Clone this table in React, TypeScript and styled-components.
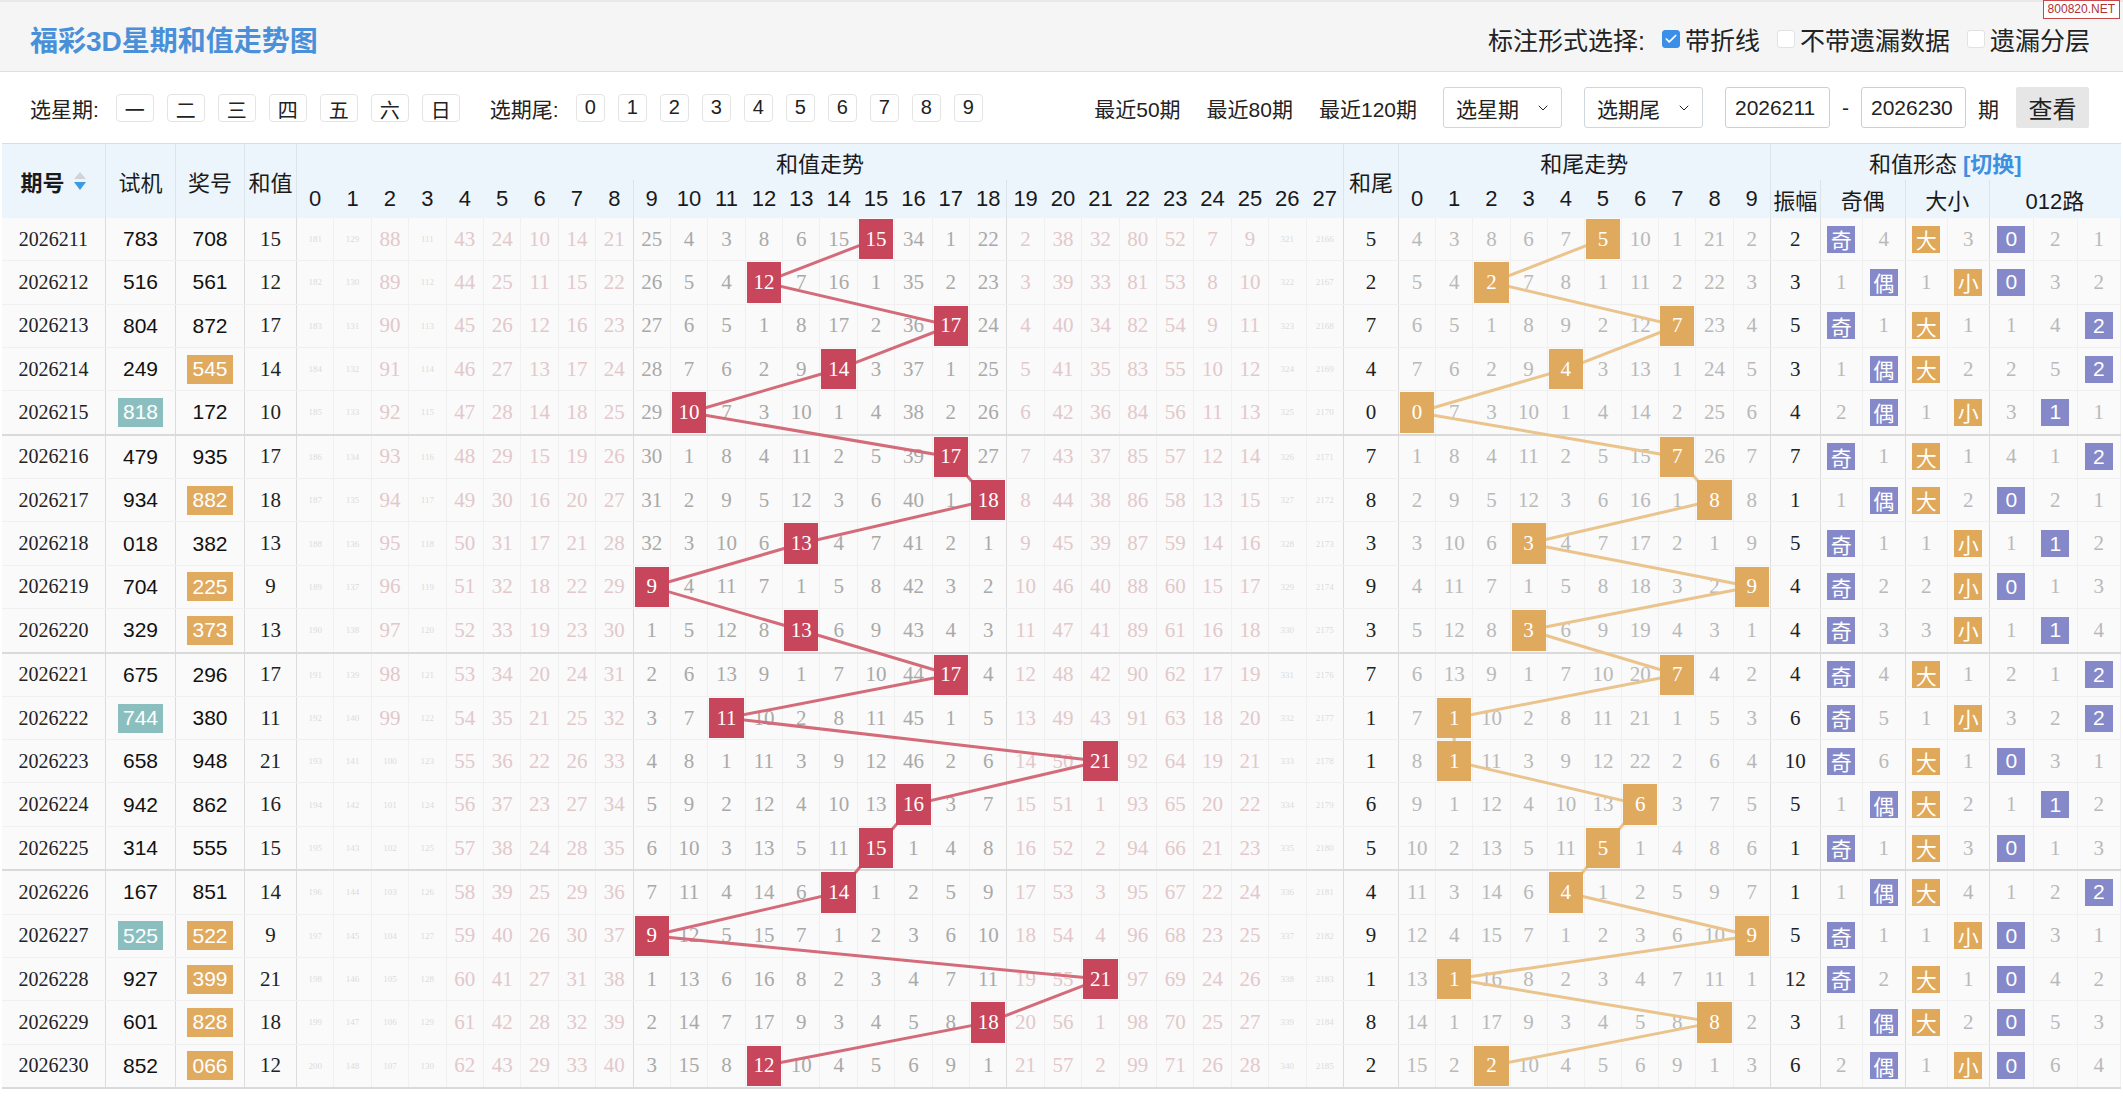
import React, { useLayoutEffect, useRef, useState } from 'react'
import styled, { createGlobalStyle } from 'styled-components'
import { Check, ChevronDown } from 'lucide-react'

const COLS =
  '104px 70px 69px 52px repeat(28, 37.4px) 55px repeat(10, 37.2px) 50px 42px 43px 42px 42px 44px 44px 43px'

type Draw = {
  id: string
  test: string
  prize: string
  sum: number
  trend: number[]
  tail: number[]
  amp: number
  oe: number[]
  bs: number[]
  road: number[]
}

const nums = (s: string) => s.split(' ').map(Number)

// [期号, 试机, 奖号, 和值, 和值遗漏0-27, 和尾遗漏0-9, 振幅, 奇偶, 大小, 012路]
const RAW: [string, string, string, number, string, string, number, string, string, string][] = [
  ['2026211', '783', '708', 15, '181 129 88 111 43 24 10 14 21 25 4 3 8 6 15 15 34 1 22 2 38 32 80 52 7 9 321 2166', '4 3 8 6 7 5 10 1 21 2', 2, '0 4', '0 3', '0 2 1'],
  ['2026212', '516', '561', 12, '182 130 89 112 44 25 11 15 22 26 5 4 12 7 16 1 35 2 23 3 39 33 81 53 8 10 322 2167', '5 4 2 7 8 1 11 2 22 3', 3, '1 0', '1 0', '0 3 2'],
  ['2026213', '804', '872', 17, '183 131 90 113 45 26 12 16 23 27 6 5 1 8 17 2 36 17 24 4 40 34 82 54 9 11 323 2168', '6 5 1 8 9 2 12 7 23 4', 5, '0 1', '0 1', '1 4 0'],
  ['2026214', '249', '545', 14, '184 132 91 114 46 27 13 17 24 28 7 6 2 9 14 3 37 1 25 5 41 35 83 55 10 12 324 2169', '7 6 2 9 4 3 13 1 24 5', 3, '1 0', '0 2', '2 5 0'],
  ['2026215', '818', '172', 10, '185 133 92 115 47 28 14 18 25 29 10 7 3 10 1 4 38 2 26 6 42 36 84 56 11 13 325 2170', '0 7 3 10 1 4 14 2 25 6', 4, '2 0', '1 0', '3 0 1'],
  ['2026216', '479', '935', 17, '186 134 93 116 48 29 15 19 26 30 1 8 4 11 2 5 39 17 27 7 43 37 85 57 12 14 326 2171', '1 8 4 11 2 5 15 7 26 7', 7, '0 1', '0 1', '4 1 0'],
  ['2026217', '934', '882', 18, '187 135 94 117 49 30 16 20 27 31 2 9 5 12 3 6 40 1 18 8 44 38 86 58 13 15 327 2172', '2 9 5 12 3 6 16 1 8 8', 1, '1 0', '0 2', '0 2 1'],
  ['2026218', '018', '382', 13, '188 136 95 118 50 31 17 21 28 32 3 10 6 13 4 7 41 2 1 9 45 39 87 59 14 16 328 2173', '3 10 6 3 4 7 17 2 1 9', 5, '0 1', '1 0', '1 0 2'],
  ['2026219', '704', '225', 9, '189 137 96 119 51 32 18 22 29 9 4 11 7 1 5 8 42 3 2 10 46 40 88 60 15 17 329 2174', '4 11 7 1 5 8 18 3 2 9', 4, '0 2', '2 0', '0 1 3'],
  ['2026220', '329', '373', 13, '190 138 97 120 52 33 19 23 30 1 5 12 8 13 6 9 43 4 3 11 47 41 89 61 16 18 330 2175', '5 12 8 3 6 9 19 4 3 1', 4, '0 3', '3 0', '1 0 4'],
  ['2026221', '675', '296', 17, '191 139 98 121 53 34 20 24 31 2 6 13 9 1 7 10 44 17 4 12 48 42 90 62 17 19 331 2176', '6 13 9 1 7 10 20 7 4 2', 4, '0 4', '0 1', '2 1 0'],
  ['2026222', '744', '380', 11, '192 140 99 122 54 35 21 25 32 3 7 11 10 2 8 11 45 1 5 13 49 43 91 63 18 20 332 2177', '7 1 10 2 8 11 21 1 5 3', 6, '0 5', '1 0', '3 2 0'],
  ['2026223', '658', '948', 21, '193 141 100 123 55 36 22 26 33 4 8 1 11 3 9 12 46 2 6 14 50 21 92 64 19 21 333 2178', '8 1 11 3 9 12 22 2 6 4', 10, '0 6', '0 1', '0 3 1'],
  ['2026224', '942', '862', 16, '194 142 101 124 56 37 23 27 34 5 9 2 12 4 10 13 16 3 7 15 51 1 93 65 20 22 334 2179', '9 1 12 4 10 13 6 3 7 5', 5, '1 0', '0 2', '1 0 2'],
  ['2026225', '314', '555', 15, '195 143 102 125 57 38 24 28 35 6 10 3 13 5 11 15 1 4 8 16 52 2 94 66 21 23 335 2180', '10 2 13 5 11 5 1 4 8 6', 1, '0 1', '0 3', '0 1 3'],
  ['2026226', '167', '851', 14, '196 144 103 126 58 39 25 29 36 7 11 4 14 6 14 1 2 5 9 17 53 3 95 67 22 24 336 2181', '11 3 14 6 4 1 2 5 9 7', 1, '1 0', '0 4', '1 2 0'],
  ['2026227', '525', '522', 9, '197 145 104 127 59 40 26 30 37 9 12 5 15 7 1 2 3 6 10 18 54 4 96 68 23 25 337 2182', '12 4 15 7 1 2 3 6 10 9', 5, '0 1', '1 0', '0 3 1'],
  ['2026228', '927', '399', 21, '198 146 105 128 60 41 27 31 38 1 13 6 16 8 2 3 4 7 11 19 55 21 97 69 24 26 338 2183', '13 1 16 8 2 3 4 7 11 1', 12, '0 2', '0 1', '0 4 2'],
  ['2026229', '601', '828', 18, '199 147 106 129 61 42 28 32 39 2 14 7 17 9 3 4 5 8 18 20 56 1 98 70 25 27 339 2184', '14 1 17 9 3 4 5 8 8 2', 3, '1 0', '0 2', '0 5 3'],
  ['2026230', '852', '066', 12, '200 148 107 130 62 43 29 33 40 3 15 8 12 10 4 5 6 9 1 21 57 2 99 71 26 28 340 2185', '15 2 2 10 4 5 6 9 1 3', 6, '2 0', '1 0', '0 6 4'],
]

const DRAWS: Draw[] = RAW.map(([id, test, prize, sum, trend, tail, amp, oe, bs, road]) => ({
  id,
  test,
  prize,
  sum,
  trend: nums(trend),
  tail: nums(tail),
  amp,
  oe: nums(oe),
  bs: nums(bs),
  road: nums(road),
}))

// 组三：恰好两位相同
const isPair = (n: string) => new Set(n.split('')).size === 2

const GlobalStyle = createGlobalStyle`
  html, body { margin: 0; padding: 0; background: #fff; }
  body {
    font-family: "Liberation Sans", "Noto Sans CJK SC", sans-serif;
    color: #222;
  }
  * { box-sizing: border-box; }
`

const Page = styled.div`
  position: relative;
  width: 100%;
`

const Watermark = styled.div`
  position: absolute;
  top: 0;
  right: 3px;
  padding: 1px 4px;
  border: 1px solid #c84848;
  background: #fff;
  color: #b03232;
  font-size: 12px;
  line-height: 15px;
`

const TitleBar = styled.header`
  height: 72px;
  display: flex;
  align-items: center;
  justify-content: space-between;
  padding: 4px 33px 0 30px;
  background: #f5f5f5;
  border-top: 2px solid #e8e8e8;
  border-bottom: 1px solid #dedede;
`

const Title = styled.h1`
  margin: 0;
  font-size: 28px;
  font-weight: 700;
  color: #4a90d9;
`

const MarkOptions = styled.div`
  display: flex;
  align-items: center;
  font-size: 25px;
  color: #222;
`

const OptionLabel = styled.label`
  display: flex;
  align-items: center;
  gap: 5px;
  margin-left: 17px;
`

const CheckBox = styled.span<{ $on?: boolean }>`
  width: 18px;
  height: 18px;
  border-radius: 3px;
  display: flex;
  align-items: center;
  justify-content: center;
  background: ${p => (p.$on ? '#3b8fe6' : '#fff')};
  border: 1px solid ${p => (p.$on ? '#3b8fe6' : '#e2e2e2')};
`

const FilterBar = styled.div`
  height: 71px;
  display: flex;
  align-items: center;
  justify-content: space-between;
  padding: 0 34px 0 30px;
  font-size: 21px;
`

const Group = styled.div<{ $gap: number }>`
  display: flex;
  align-items: center;
  gap: ${p => p.$gap}px;
`

const GroupLabel = styled.span`
  margin-right: 4px;
`

const PickButton = styled.button<{ $wide?: boolean }>`
  width: ${p => (p.$wide ? 38 : 29)}px;
  height: 28px;
  padding: 0;
  border: 1px solid #e4e4e4;
  border-radius: 4px;
  background: #fff;
  font-family: inherit;
  font-size: 20px;
  color: #222;
`

const Spacer = styled.span`
  width: 4px;
`

const Recent = styled.span`
  color: #222;
  margin-right: 4px;
`

const SelectBox = styled.div`
  width: 119px;
  height: 41px;
  display: flex;
  align-items: center;
  justify-content: space-between;
  padding: 0 10px 0 12px;
  border: 1px solid #cfd6dd;
  border-radius: 3px;
  background: #fff;
`

const RangeInput = styled.input`
  width: 105px;
  height: 41px;
  padding: 0 9px;
  border: 1px solid #cfcfcf;
  border-radius: 3px;
  font-family: inherit;
  font-size: 21px;
  color: #222;
`

const QueryButton = styled.button`
  width: 73px;
  height: 41px;
  margin-left: 5px;
  border: none;
  border-radius: 2px;
  background: #e6e6e6;
  font-family: inherit;
  font-size: 24px;
  color: #222;
`

const Board = styled.div`
  position: relative;
  isolation: isolate;
  margin: 0 2px;
`

const HeadGrid = styled.div`
  display: grid;
  grid-template-columns: ${COLS};
  grid-template-rows: 36px 38px;
  background: #edf5fc;
  border-top: 1px solid #dcdcdc;
`

const HeadCell = styled.div<{ $span?: number; $tall?: boolean; $line?: boolean; $bold?: boolean }>`
  grid-column: span ${p => p.$span ?? 1};
  grid-row: span ${p => (p.$tall ? 2 : 1)};
  display: flex;
  align-items: center;
  justify-content: center;
  white-space: nowrap;
  font-size: 22px;
  font-weight: ${p => (p.$bold ? 700 : 400)};
  color: #1a1a1a;
  border-right: 1px solid ${p => (p.$line ? '#dbe3eb' : 'transparent')};
`

const Switch = styled.span`
  margin-left: 6px;
  color: #3d8fe0;
  font-weight: 700;
`

const Row = styled.div<{ $groupEnd: boolean }>`
  display: grid;
  grid-template-columns: ${COLS};
  height: ${p => (p.$groupEnd ? 44.6 : 43.3)}px;
  background: #fafafa;
  border-bottom: ${p => (p.$groupEnd ? '2px solid #dadada' : '1px solid #f0f0f0')};
`

const Cell = styled.div<{ $hard?: boolean }>`
  display: flex;
  align-items: center;
  justify-content: center;
  min-width: 0;
  border-right: 1px solid ${p => (p.$hard ? '#dcdcdc' : '#f0f0f0')};
  font-family: "Liberation Serif", "Noto Sans CJK SC", serif;
  font-size: 21px;
  color: #222;
`

const IdCell = styled(Cell)`
  font-size: 20px;
`

const DrawCell = styled(Cell)`
  font-family: "Liberation Sans", "Noto Sans CJK SC", sans-serif;
  color: #111;
`

const TrendCell = styled(Cell)<{ $tone: 'pink' | 'gray' }>`
  color: ${p => (p.$tone === 'pink' ? '#e2c8cb' : '#a9a9a9')};
`

const MissCell = styled(Cell)`
  color: #b9b9b9;
`

const Tiny = styled.span`
  font-size: 9px;
  color: #dadada;
`

const Tag = styled.span<{ $tone: 'teal' | 'gold' }>`
  height: 29px;
  padding: 0 5px;
  display: flex;
  align-items: center;
  background: ${p => (p.$tone === 'teal' ? '#8bbfbf' : '#e0aa5f')};
  color: #fff;
`

const Hit = styled.span<{ $tone: 'red' | 'gold' }>`
  position: relative;
  z-index: 2;
  width: calc(100% - 2px);
  height: calc(100% - 2px);
  display: flex;
  align-items: center;
  justify-content: center;
  background: ${p => (p.$tone === 'red' ? '#c8465b' : '#e0aa5e')};
  color: #fff;
`

const Badge = styled.span<{ $tone: 'violet' | 'gold' }>`
  width: 28px;
  height: 27px;
  display: flex;
  align-items: center;
  justify-content: center;
  background: ${p => (p.$tone === 'violet' ? '#8589c9' : '#e0a95a')};
  color: #fff;
  font-family: "Liberation Sans", "Noto Sans CJK SC", sans-serif;
  font-size: 21px;
`

const Lines = styled.svg`
  position: absolute;
  inset: 0;
  width: 100%;
  height: 100%;
  z-index: 1;
  pointer-events: none;
`

function SortIcon() {
  return (
    <svg width="14" height="20" viewBox="0 0 14 20" style={{ marginLeft: 8 }}>
      <path d="M7 1 L13 8 H1 Z" fill="#cfd4da" />
      <path d="M1 11 H13 L7 19 Z" fill="#3a9be2" />
    </svg>
  )
}

function TableHead() {
  return (
    <HeadGrid>
      <HeadCell $tall $line $bold>
        期号
        <SortIcon />
      </HeadCell>
      <HeadCell $tall $line>试机</HeadCell>
      <HeadCell $tall $line>奖号</HeadCell>
      <HeadCell $tall $line>和值</HeadCell>
      <HeadCell $span={28} $line>和值走势</HeadCell>
      <HeadCell $tall $line>和尾</HeadCell>
      <HeadCell $span={10} $line>和尾走势</HeadCell>
      <HeadCell $span={8}>
        和值形态<Switch>[切换]</Switch>
      </HeadCell>
      {Array.from({ length: 28 }, (_, i) => (
        <HeadCell key={`s${i}`} $line={i === 8 || i === 18 || i === 27}>
          {i}
        </HeadCell>
      ))}
      {Array.from({ length: 10 }, (_, i) => (
        <HeadCell key={`t${i}`} $line={i === 9}>
          {i}
        </HeadCell>
      ))}
      <HeadCell $line>振幅</HeadCell>
      <HeadCell $span={2} $line>奇偶</HeadCell>
      <HeadCell $span={2} $line>大小</HeadCell>
      <HeadCell $span={3}>012路</HeadCell>
    </HeadGrid>
  )
}

function FormCells({ values, hit, labels, tone, last }: { values: number[]; hit: number; labels: string[]; tone: 'violet' | 'gold'; last?: boolean }) {
  return (
    <>
      {values.map((v, i) => (
        <MissCell key={i} $hard={i === values.length - 1 && !last}>
          {i === hit ? <Badge $tone={tone}>{labels[i]}</Badge> : v}
        </MissCell>
      ))}
    </>
  )
}

function DrawRow({ d, groupEnd }: { d: Draw; groupEnd: boolean }) {
  const tail = d.sum % 10
  return (
    <Row $groupEnd={groupEnd}>
      <IdCell $hard>{d.id}</IdCell>
      <DrawCell $hard>{isPair(d.test) ? <Tag $tone="teal">{d.test}</Tag> : d.test}</DrawCell>
      <DrawCell $hard>{isPair(d.prize) ? <Tag $tone="gold">{d.prize}</Tag> : d.prize}</DrawCell>
      <Cell $hard>{d.sum}</Cell>
      {d.trend.map((v, c) => (
        <TrendCell key={c} $tone={c >= 9 && c <= 18 ? 'gray' : 'pink'} $hard={c === 8 || c === 18 || c === 27}>
          {c === d.sum ? (
            <Hit $tone="red" data-hit="sum">
              {v}
            </Hit>
          ) : v >= 100 ? (
            <Tiny>{v}</Tiny>
          ) : (
            v
          )}
        </TrendCell>
      ))}
      <Cell $hard>{tail}</Cell>
      {d.tail.map((v, c) => (
        <MissCell key={c} $hard={c === 9}>
          {c === tail ? (
            <Hit $tone="gold" data-hit="tail">
              {v}
            </Hit>
          ) : (
            v
          )}
        </MissCell>
      ))}
      <Cell $hard>{d.amp}</Cell>
      <FormCells values={d.oe} hit={d.sum % 2 === 1 ? 0 : 1} labels={['奇', '偶']} tone="violet" />
      <FormCells values={d.bs} hit={d.sum >= 14 ? 0 : 1} labels={['大', '小']} tone="gold" />
      <FormCells values={d.road} hit={d.sum % 3} labels={['0', '1', '2']} tone="violet" last />
    </Row>
  )
}

function TrendBoard() {
  const boardRef = useRef<HTMLDivElement>(null)
  const [paths, setPaths] = useState({ sum: '', tail: '' })

  useLayoutEffect(() => {
    const board = boardRef.current
    if (!board) return
    const measure = () => {
      const box = board.getBoundingClientRect()
      const points = (kind: string) =>
        Array.from(board.querySelectorAll<HTMLElement>(`[data-hit="${kind}"]`))
          .map(el => {
            const r = el.getBoundingClientRect()
            return `${r.left - box.left + r.width / 2},${r.top - box.top + r.height / 2}`
          })
          .join(' ')
      setPaths({ sum: points('sum'), tail: points('tail') })
    }
    measure()
    window.addEventListener('resize', measure)
    return () => window.removeEventListener('resize', measure)
  }, [])

  return (
    <Board ref={boardRef}>
      <TableHead />
      {DRAWS.map((d, i) => (
        <DrawRow key={d.id} d={d} groupEnd={i % 5 === 4} />
      ))}
      <Lines>
        <polyline points={paths.sum} fill="none" stroke="#d46b7a" strokeWidth={3} />
        <polyline points={paths.tail} fill="none" stroke="#eac48c" strokeWidth={3} />
      </Lines>
    </Board>
  )
}

const DAYS = ['一', '二', '三', '四', '五', '六', '日']

export default function App() {
  return (
    <Page>
      <GlobalStyle />
      <TitleBar>
        <Title>福彩3D星期和值走势图</Title>
        <MarkOptions>
          <span>标注形式选择:</span>
          <OptionLabel>
            <CheckBox $on>
              <Check size={14} color="#fff" strokeWidth={3} />
            </CheckBox>
            带折线
          </OptionLabel>
          <OptionLabel>
            <CheckBox />
            不带遗漏数据
          </OptionLabel>
          <OptionLabel>
            <CheckBox />
            遗漏分层
          </OptionLabel>
        </MarkOptions>
      </TitleBar>
      <FilterBar>
        <Group $gap={13}>
          <GroupLabel>选星期:</GroupLabel>
          {DAYS.map(d => (
            <PickButton key={d} $wide>
              {d}
            </PickButton>
          ))}
          <Spacer />
          <GroupLabel>选期尾:</GroupLabel>
          {Array.from({ length: 10 }, (_, i) => (
            <PickButton key={i}>{i}</PickButton>
          ))}
        </Group>
        <Group $gap={22}>
          <Recent>最近50期</Recent>
          <Recent>最近80期</Recent>
          <Recent>最近120期</Recent>
          <SelectBox>
            选星期
            <ChevronDown size={16} strokeWidth={1.5} />
          </SelectBox>
          <SelectBox>
            选期尾
            <ChevronDown size={16} strokeWidth={1.5} />
          </SelectBox>
          <Group $gap={12}>
            <RangeInput defaultValue="2026211" />
            <span>-</span>
            <RangeInput defaultValue="2026230" />
            <span>期</span>
            <QueryButton>查看</QueryButton>
          </Group>
        </Group>
      </FilterBar>
      <TrendBoard />
      <Watermark>800820.NET</Watermark>
    </Page>
  )
}
